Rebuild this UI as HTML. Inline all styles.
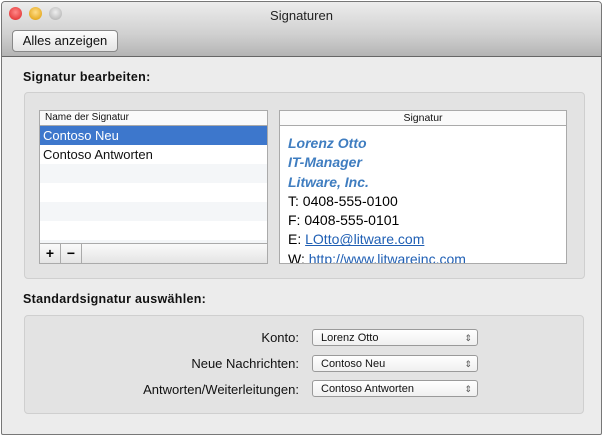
<!DOCTYPE html><html><head><style>
body{margin:0;width:607px;height:437px;background:#fff;font-family:"Liberation Sans",sans-serif;position:relative;overflow:hidden}
.win{position:absolute;left:1px;top:1px;width:599px;height:432px;border:1px solid #777;background:#ececec;border-radius:4px 4px 2px 2px;overflow:hidden}
.tb{position:absolute;left:0;top:0;right:0;height:54px;background:linear-gradient(#ececec,#d0d0d0 60%,#b4b4b4);border-bottom:1px solid #666}
.t{position:absolute;top:6px;width:100%;text-align:center;font-size:13px;color:#222}
.dot{position:absolute;top:5px;width:13px;height:13px;border-radius:50%}
.btn{position:absolute;left:10px;top:28px;width:104px;height:20px;border:1px solid #888;border-radius:4px;background:linear-gradient(#fdfdfd,#e4e4e4);font-size:13px;line-height:20px;text-align:center;color:#111}
.h{position:absolute;font-size:12.5px;font-weight:bold;color:#111;letter-spacing:.3px}
.grp{position:absolute;background:#e3e3e3;border:1px solid #cfcfcf;border-radius:4px}
.abs{position:absolute}
.lbl{position:absolute;font-size:13px;color:#111;text-align:right;width:260px;left:37px}
.pop{position:absolute;left:310px;width:166px;height:17px;border:1px solid #9a9a9a;border-radius:3px;background:linear-gradient(#fff,#f0f0f0);font-size:11px;line-height:17px;padding-left:8px;box-sizing:border-box;color:#111}
.pop:after{content:"⇕";position:absolute;right:5px;top:0;font-size:9px;color:#555}
.sig{font-size:14px;line-height:19.3px}
.bl{color:#3f7dc0;font-weight:bold;font-style:italic}
a{color:#1f5fb4;text-decoration:underline}
</style></head><body>
<div class="win">
<div class="tb">
<div class="dot" style="left:7px;background:radial-gradient(circle at 50% 40%,#f88,#d22)"></div>
<div class="dot" style="left:27px;background:radial-gradient(circle at 50% 40%,#fd8,#d90)"></div>
<div class="dot" style="left:47px;background:radial-gradient(circle at 50% 40%,#eee,#aaa)"></div>
<div class="t">Signaturen</div>
<div class="btn">Alles anzeigen</div>
</div>
<div class="h" style="left:21px;top:68px">Signatur bearbeiten:</div>
<div class="grp" style="left:22px;top:90px;width:559px;height:185px"></div>
<div class="abs" style="left:37px;top:108px;width:227px;height:152px;border:1px solid #aaa;background:#f4f6f8">
 <div style="height:14px;border-bottom:1px solid #aaa;background:#fafafa;font-size:10px;line-height:14px;padding-left:5px;color:#111">Name der Signatur</div>
 <div style="height:19px;background:#3d77cc;color:#fff;font-size:13px;line-height:19px;padding-left:3px">Contoso Neu</div>
 <div style="height:19px;font-size:13px;line-height:19px;padding-left:3px;color:#111;background:#fff">Contoso Antworten</div>
 <div style="height:19px"></div><div style="height:19px;background:#fff"></div><div style="height:19px"></div><div style="height:19px;background:#fff"></div>
 <div style="position:absolute;left:0;right:0;bottom:0;height:19px;border-top:1px solid #aaa;background:linear-gradient(#fafafa,#e4e4e4)">
  <div style="position:absolute;left:0;width:20px;height:19px;border-right:1px solid #aaa;text-align:center;font-size:14px;font-weight:bold;line-height:19px">+</div>
  <div style="position:absolute;left:21px;width:20px;height:19px;border-right:1px solid #aaa;text-align:center;font-size:14px;font-weight:bold;line-height:18px">−</div>
 </div>
</div>
<div class="abs" style="left:277px;top:108px;width:286px;height:152px;border:1px solid #aaa;background:#fff;overflow:hidden">
 <div style="height:14px;border-bottom:1px solid #aaa;background:#fafafa;font-size:10.5px;line-height:14px;text-align:center;color:#111">Signatur</div>
 <div class="sig" style="padding:8px 0 0 8px">
 <div class="bl">Lorenz Otto</div><div class="bl">IT-Manager</div><div class="bl">Litware, Inc.</div>
 <div>T: 0408-555-0100</div><div>F: 0408-555-0101</div><div>E: <a>LOtto@litware.com</a></div><div>W: <a>http://www.litwareinc.com</a></div>
 </div>
</div>
<div class="h" style="left:21px;top:290px">Standardsignatur auswählen:</div>
<div class="grp" style="left:22px;top:313px;width:558px;height:97px"></div>
<div class="lbl" style="top:328px">Konto:</div>
<div class="pop" style="top:327px">Lorenz Otto</div>
<div class="lbl" style="top:354px">Neue Nachrichten:</div>
<div class="pop" style="top:353px">Contoso Neu</div>
<div class="lbl" style="top:380px">Antworten/Weiterleitungen:</div>
<div class="pop" style="top:378px">Contoso Antworten</div>
</div>
</body></html>
